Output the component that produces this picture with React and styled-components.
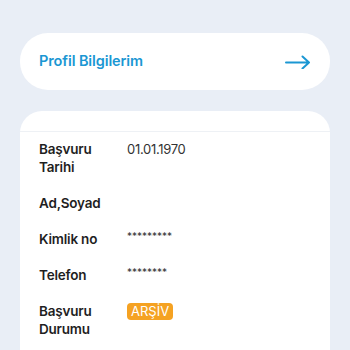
import React from "react";
import styled, { createGlobalStyle } from "styled-components";

const GlobalStyle = createGlobalStyle`
  html, body {
    margin: 0;
    padding: 0;
    background: #e9eef6;
    font-family: Inter, "Noto Sans", sans-serif;
  }
`;

const Page = styled.div`
  width: 350px;
  height: 350px;
  overflow: hidden;
  padding: 33px 20px 0;
  box-sizing: border-box;
  display: flex;
  flex-direction: column;
  gap: 21px;
`;

const LinkCard = styled.div`
  height: 57px;
  background: #fff;
  border-radius: 28px;
  display: flex;
  align-items: center;
  justify-content: space-between;
  padding: 0 19px 0 19px;
`;

const LinkTitle = styled.span`
  color: #1b97d3;
  font-size: 14.5px;
  font-weight: 600;
  letter-spacing: -0.1px;
  margin-top: -3px;
`;

const InfoCard = styled.div`
  background: #fff;
  border-radius: 22px 22px 0 0;
  flex: 1;
`;

const CardHead = styled.div`
  height: 20px;
  border-bottom: 1px solid #eef1f5;
`;

const Rows = styled.div`
  display: flex;
  flex-direction: column;
  gap: 18px;
  padding: 8px 19px 0;
`;

const Row = styled.div`
  display: grid;
  grid-template-columns: 88px 1fr;
  line-height: 18px;
  font-size: 13.5px;
  color: #1f1f1f;
`;

const Label = styled.div`
  font-weight: 600;
  white-space: pre-line;
  letter-spacing: -0.2px;
`;

const Value = styled.div`
  font-weight: 400;
  color: #333;
  letter-spacing: ${(p) => (p.$masked ? "0px" : "-0.3px")};
  font-size: ${(p) => (p.$masked ? "10px" : "13px")};
  line-height: ${(p) => (p.$masked ? "12px" : "18px")};
`;

const Badge = styled.span`
  display: inline-block;
  background: #f5a222;
  color: #fff;
  font-size: 13px;
  font-weight: 400;
  line-height: 17px;
  padding: 0 4px;
  border-radius: 4px;
`;

const rows = [
  { label: "Başvuru\nTarihi", value: "01.01.1970" },
  { label: "Ad,Soyad", value: "" },
  { label: "Kimlik no", value: "*********", masked: true },
  { label: "Telefon", value: "********", masked: true },
];

export default function App() {
  return (
    <>
      <GlobalStyle />
      <Page>
        <LinkCard>
          <LinkTitle>Profil Bilgilerim</LinkTitle>
          <svg width="26" height="14" viewBox="0 0 26 14" fill="none">
            <path
              d="M1 7.5H24M17.5 1.5L24 7.5L17.5 13.5"
              stroke="#1b97d3"
              strokeWidth="2"
              strokeLinecap="round"
              strokeLinejoin="round"
            />
          </svg>
        </LinkCard>
        <InfoCard>
          <CardHead />
          <Rows>
            {rows.map((r) => (
              <Row key={r.label}>
                <Label>{r.label}</Label>
                <Value $masked={r.masked}>{r.value}</Value>
              </Row>
            ))}
            <Row>
              <Label>{"Başvuru\nDurumu"}</Label>
              <div>
                <Badge>ARŞİV</Badge>
              </div>
            </Row>
          </Rows>
        </InfoCard>
      </Page>
    </>
  );
}
